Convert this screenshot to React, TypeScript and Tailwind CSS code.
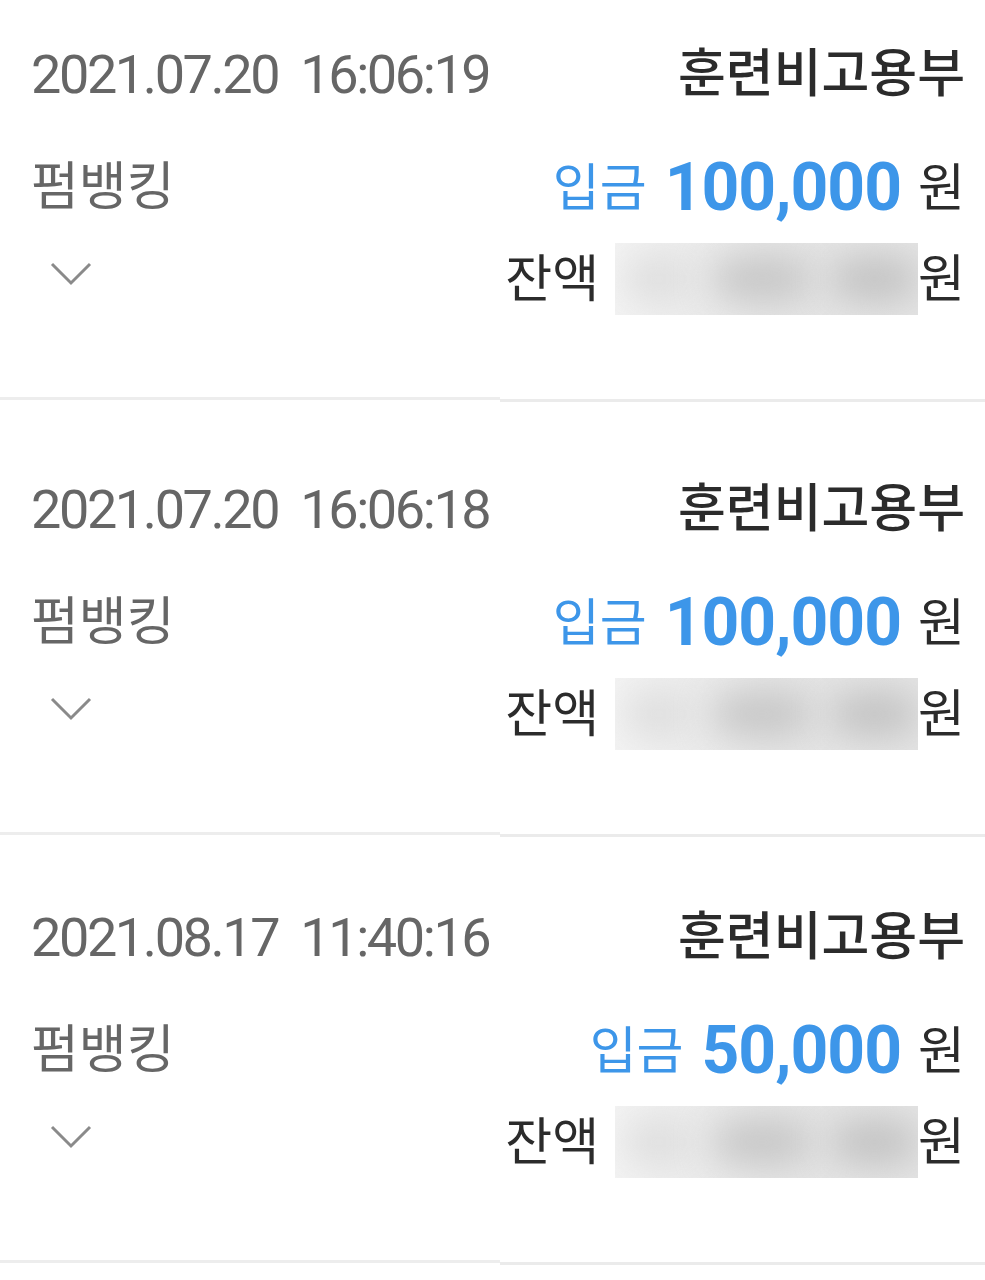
type Tx = {
  date: string;
  amount: string;
};

const rows: Tx[] = [
  { date: "2021.07.20  16:06:19", amount: "100,000" },
  { date: "2021.07.20  16:06:18", amount: "100,000" },
  { date: "2021.08.17  11:40:16", amount: "50,000" },
];

function Chevron() {
  return (
    <svg width="44" height="26" viewBox="0 0 44 26" fill="none">
      <path d="M3 3 L22 22 L41 3" stroke="#8a8a8a" strokeWidth="3" />
    </svg>
  );
}

function Blurred() {
  return (
    <div className="w-[303px] h-[72px] bg-gradient-to-r from-[#f3f3f3] via-[#e6e6e6] to-[#e4e4e4] overflow-hidden flex items-center gap-[20px] pl-[10px]">
      <div className="w-[70px] h-[44px] rounded-full bg-[#dddddd] blur-[18px]" />
      <div className="w-[100px] h-[44px] rounded-full bg-[#c6c6c6] blur-[18px]" />
      <div className="w-[90px] h-[44px] rounded-full bg-[#c2c2c2] blur-[18px]" />
    </div>
  );
}

function Separator() {
  return (
    <div className="flex">
      <div className="w-[500px] h-[3px] bg-[#ededed]" />
      <div className="flex-1 h-[3px] mt-[2px] bg-[#ebebeb]" />
    </div>
  );
}

function Row({ tx, top }: { tx: Tx; top: string }) {
  return (
    <div>
      <div className={`${top} pb-[82px] pl-[31px] pr-[20px]`}>
        <div className="h-[60px] flex items-center justify-between">
          <div className="text-[54px] tracking-[-2.4px] text-[#666666] whitespace-pre">{tx.date}</div>
          <div className="text-[52px] font-medium text-[#2b2b2b]">훈련비고용부</div>
        </div>
        <div className="mt-[53px] h-[60px] flex items-center justify-between">
          <div className="text-[52px] text-[#666666]">펌뱅킹</div>
          <div className="flex items-center">
            <span className="text-[51px] text-[#3d96e9]">입금</span>
            <span className="ml-[18px] text-[66px] font-bold tracking-[-1px] text-[#3d96e9]">{tx.amount}</span>
            <span className="ml-[17px] text-[51px] text-[#2b2b2b]">원</span>
          </div>
        </div>
        <div className="mt-[25px] h-[72px] flex items-center justify-between">
          <div className="pl-[18px] pb-[10px]">
            <Chevron />
          </div>
          <div className="flex items-center">
            <span className="text-[51px] text-[#2b2b2b]">잔액</span>
            <div className="ml-[16px]">
              <Blurred />
            </div>
            <span className="text-[51px] text-[#2b2b2b]">원</span>
          </div>
        </div>
      </div>
      <Separator />
    </div>
  );
}

export default function App() {
  return (
    <div className="w-[985px] h-[1280px] bg-white overflow-hidden font-['Roboto','Noto_Sans_CJK_KR',sans-serif] leading-none">
      <Row tx={rows[0]} top="pt-[45px]" />
      <Row tx={rows[1]} top="pt-[78px]" />
      <Row tx={rows[2]} top="pt-[71px]" />
    </div>
  );
}
